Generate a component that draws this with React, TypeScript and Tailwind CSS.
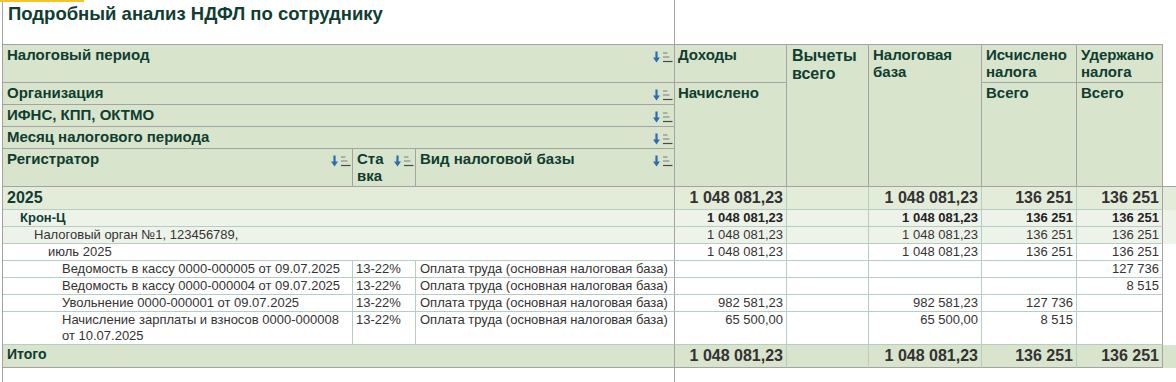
import type { ReactNode } from 'react';

const COLS = 'grid grid-cols-[350px_63px_259px_112px_82px_113px_95px_86px]';

function SortIcon() {
  return (
    <svg width="20" height="12" viewBox="0 0 20 12" className="shrink-0 mt-[5px]">
      <path d="M3.5 0.5v7.5" stroke="#2b6cb5" strokeWidth="2.2" />
      <path d="M0 6.5h7l-3.5 5z" fill="#2b6cb5" />
      <path d="M10 2h4.5M10 6h6.5" stroke="#7d7d7d" strokeWidth="1.1" />
      <path d="M10 10.5h9.5" stroke="#4a4a4a" strokeWidth="1.2" />
    </svg>
  );
}

function HeadCell({
  className,
  children,
  sort,
}: {
  className: string;
  children: ReactNode;
  sort?: boolean;
}) {
  return (
    <div
      className={`flex items-start justify-between border-r border-b border-[#a3a3a3] pt-[1px] pl-[4px] pr-[1px] ${className}`}
    >
      <span>{children}</span>
      {sort && <SortIcon />}
    </div>
  );
}

type Row = {
  label: ReactNode;
  indent: string;
  rate?: string;
  base?: string;
  values: string[];
  kind: 'year' | 'org' | 'tax' | 'plain' | 'total';
  tall?: boolean;
};

const rows: Row[] = [
  {
    label: '2025',
    indent: 'pl-[4px]',
    values: ['1 048 081,23', '', '1 048 081,23', '136 251', '136 251'],
    kind: 'year',
  },
  {
    label: 'Крон-Ц',
    indent: 'pl-[17px]',
    values: ['1 048 081,23', '', '1 048 081,23', '136 251', '136 251'],
    kind: 'org',
  },
  {
    label: 'Налоговый орган №1, 123456789,',
    indent: 'pl-[31px]',
    values: ['1 048 081,23', '', '1 048 081,23', '136 251', '136 251'],
    kind: 'tax',
  },
  {
    label: 'июль 2025',
    indent: 'pl-[45px]',
    values: ['1 048 081,23', '', '1 048 081,23', '136 251', '136 251'],
    kind: 'plain',
  },
  {
    label: 'Ведомость в кассу 0000-000005 от 09.07.2025',
    indent: 'pl-[59px]',
    rate: '13-22%',
    base: 'Оплата труда (основная налоговая база)',
    values: ['', '', '', '', '127 736'],
    kind: 'plain',
  },
  {
    label: 'Ведомость в кассу 0000-000004 от 09.07.2025',
    indent: 'pl-[59px]',
    rate: '13-22%',
    base: 'Оплата труда (основная налоговая база)',
    values: ['', '', '', '', '8 515'],
    kind: 'plain',
  },
  {
    label: 'Увольнение 0000-000001 от 09.07.2025',
    indent: 'pl-[59px]',
    rate: '13-22%',
    base: 'Оплата труда (основная налоговая база)',
    values: ['982 581,23', '', '982 581,23', '127 736', ''],
    kind: 'plain',
  },
  {
    label: (
      <>
        Начисление зарплаты и взносов 0000-000008
        <br />
        от 10.07.2025
      </>
    ),
    indent: 'pl-[59px]',
    rate: '13-22%',
    base: 'Оплата труда (основная налоговая база)',
    values: ['65 500,00', '', '65 500,00', '8 515', ''],
    kind: 'plain',
    tall: true,
  },
  {
    label: 'Итого',
    indent: 'pl-[4px]',
    values: ['1 048 081,23', '', '1 048 081,23', '136 251', '136 251'],
    kind: 'total',
  },
];

function BodyRow({ row }: { row: Row }) {
  const bg =
    row.kind === 'year'
      ? 'bg-[#e3ecd9]'
      : row.kind === 'total'
        ? 'bg-[#d8e4cc]'
        : row.kind === 'org' || row.kind === 'tax'
          ? 'bg-[#eef3ea]'
          : 'bg-white';
  const height =
    row.kind === 'year' || row.kind === 'total' ? 'h-[23px]' : row.tall ? 'h-[33px]' : 'h-[17px]';
  const line = row.kind === 'total' ? 'border-b-[#a3a3a3]' : 'border-b-[#b5cdc3]';
  const big = row.kind === 'year' || row.kind === 'total';
  const labelText =
    row.kind === 'year'
      ? 'text-[16px] leading-[22px] font-bold text-[#0f3d31]'
      : row.kind === 'total'
        ? 'text-[14px] leading-[16px] pt-[1px] font-bold text-[#0f3d31]'
        : row.kind === 'org'
          ? 'text-[13px] leading-[16px] font-bold text-[#0f3d31]'
          : 'text-[13px] leading-[16px] text-[#333333]';
  const numText = big
    ? 'text-[16px] leading-[22px] font-bold text-[#333333]'
    : row.kind === 'org'
      ? 'text-[13px] leading-[16px] font-bold text-[#222222]'
      : 'text-[13px] leading-[16px] text-[#333333]';

  return (
    <div className={`${COLS} ${height} ${bg}`}>
      {row.rate ? (
        <>
          <div className={`border-r border-b border-r-[#b5cdc3] ${line} ${row.indent} ${labelText}`}>
            {row.label}
          </div>
          <div className={`border-r border-b border-r-[#b5cdc3] ${line} pl-[3px] ${labelText}`}>
            {row.rate}
          </div>
          <div className={`border-r border-b border-r-[#a3a3a3] ${line} pl-[4px] whitespace-nowrap ${labelText}`}>
            {row.base}
          </div>
        </>
      ) : (
        <div className={`col-span-3 border-r border-b border-r-[#a3a3a3] ${line} ${row.indent} ${labelText}`}>
          {row.label}
        </div>
      )}
      {row.values.map((v, i) => (
        <div
          key={i}
          className={`border-r border-b ${i === 4 ? 'border-r-[#a3a3a3]' : 'border-r-[#b5cdc3]'} ${line} pr-[3px] text-right whitespace-nowrap ${numText}`}
        >
          {v}
        </div>
      ))}
    </div>
  );
}

export default function App() {
  return (
    <div className="relative h-[382px] w-[1176px] overflow-hidden bg-white pl-[2px] font-['Liberation_Sans',Arial,sans-serif]">
      <div className="absolute top-0 left-0 h-[2px] w-[84px] bg-[#f3c623]" />
      <div className="flex h-full flex-col border-l border-[#a3a3a3]">
        {/* заголовок отчёта */}
        <div className="flex h-[44px] shrink-0">
          <div className="w-[672px] border-r border-[#a3a3a3] pt-[2px] pl-[5px] text-[18.5px] leading-[24px] font-bold text-[#0f3d31]">
            Подробный анализ НДФЛ по сотруднику
          </div>
        </div>

        {/* шапка таблицы */}
        <div className="flex shrink-0">
          <div
            className={`${COLS} grid-rows-[38px_22px_22px_22px_38px] border-t border-[#a3a3a3] bg-[#d8e4cc] text-[15px] leading-[17px] font-bold text-[#0f3d31]`}
          >
            <HeadCell className="col-span-3 col-start-1 row-start-1" sort>
              Налоговый период
            </HeadCell>
            <HeadCell className="col-span-3 col-start-1 row-start-2" sort>
              Организация
            </HeadCell>
            <HeadCell className="col-span-3 col-start-1 row-start-3" sort>
              ИФНС, КПП, ОКТМО
            </HeadCell>
            <HeadCell className="col-span-3 col-start-1 row-start-4" sort>
              Месяц налогового периода
            </HeadCell>
            <HeadCell className="col-start-1 row-start-5" sort>
              Регистратор
            </HeadCell>
            <HeadCell className="col-start-2 row-start-5" sort>
              Ста
              <br />
              вка
            </HeadCell>
            <HeadCell className="col-start-3 row-start-5" sort>
              Вид налоговой базы
            </HeadCell>
            <HeadCell className="col-start-4 row-start-1 !pl-[3px]">Доходы</HeadCell>
            <HeadCell className="col-start-4 row-start-2 row-span-4 !pl-[3px]">Начислено</HeadCell>
            <HeadCell className="col-start-5 row-start-1 row-span-5 !pl-[5px] !pt-[2px] text-[16px] leading-[18px]">
              Вычеты
              <br />
              всего
            </HeadCell>
            <HeadCell className="col-start-6 row-start-1 row-span-5">
              Налоговая
              <br />
              база
            </HeadCell>
            <HeadCell className="col-start-7 row-start-1">
              Исчислено
              <br />
              налога
            </HeadCell>
            <HeadCell className="col-start-7 row-start-2 row-span-4">Всего</HeadCell>
            <HeadCell className="col-start-8 row-start-1">
              Удержано
              <br />
              налога
            </HeadCell>
            <HeadCell className="col-start-8 row-start-2 row-span-4">Всего</HeadCell>
          </div>
          <div className="flex-1 border-b border-[#a3a3a3]" />
        </div>

        {/* строки отчёта */}
        {rows.map((row, i) => (
          <BodyRow key={i} row={row} />
        ))}

        <div className="flex flex-1">
          <div className="w-[672px] border-r border-[#a3a3a3]" />
        </div>
      </div>
    </div>
  );
}
